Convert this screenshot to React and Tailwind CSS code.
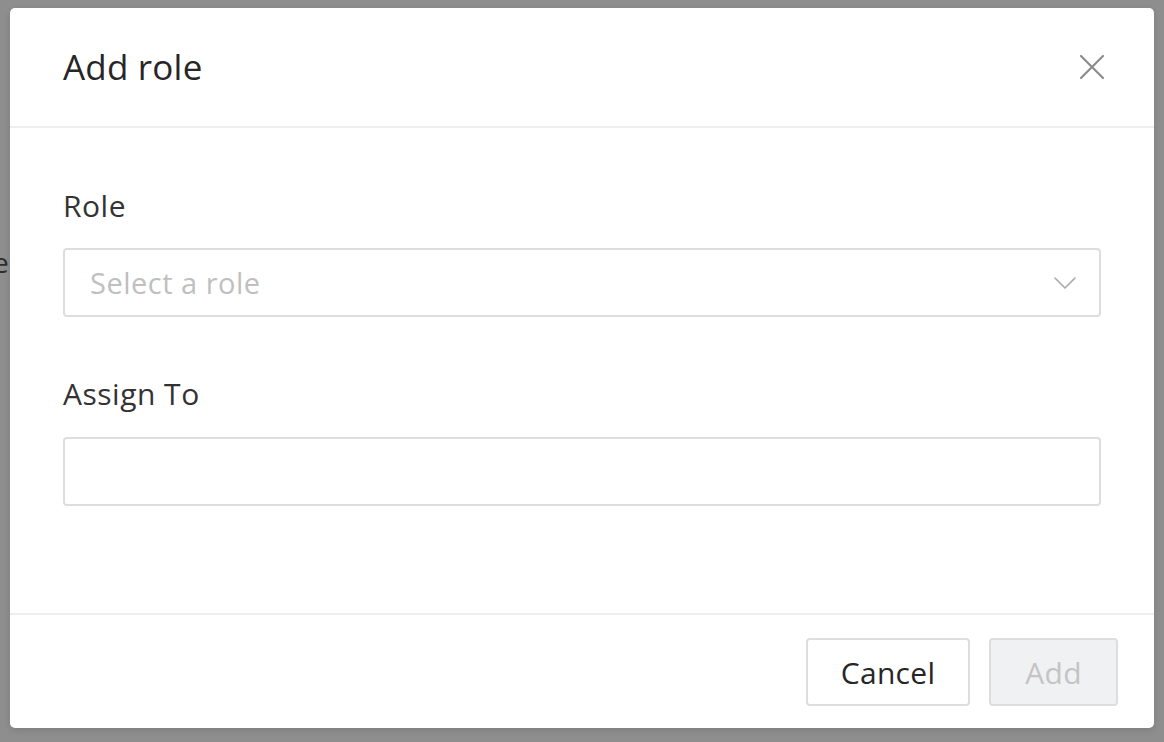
import React, { useState } from "react";

const font = { fontFamily: '"Open Sans", "Noto Sans", sans-serif' };

const ChevronDown = () => (
  <svg width="24" height="16" viewBox="0 0 24 16" fill="none" stroke="#a8a8a8" strokeWidth="1.6" strokeLinecap="round" strokeLinejoin="round">
    <path d="M2 3 L12 13 L22 3" />
  </svg>
);

const CloseIcon = () => (
  <svg width="26" height="26" viewBox="0 0 26 26" fill="none" stroke="#8c8c8c" strokeWidth="2.2" strokeLinecap="round">
    <path d="M2 2 L24 24 M24 2 L2 24" />
  </svg>
);

export default function App() {
  const [role, setRole] = useState("");
  const [assignee, setAssignee] = useState("");

  return (
    <div className="relative w-[1164px] h-[742px] overflow-hidden bg-[#8e8e8e]" style={font}>
      {/* page content peeking out under the overlay */}
      <span className="absolute left-[-7px] top-[242px] text-[28px] leading-[40px] text-[#2e2e2e]">e</span>

      <div className="relative ml-[10px] mt-[8px] w-[1144px] h-[720px] bg-white rounded-[5px] shadow-[0_2px_6px_rgba(0,0,0,0.12)] flex flex-col">
        {/* Header */}
        <div className="h-[120px] flex items-center justify-between pl-[53px] pr-[49px] border-b-2 border-[#eeeeee]">
          <h2 className="text-[35px] leading-[48px] font-medium tracking-[0.2px] text-[#262626]">Add role</h2>
          <button className="p-0 text-[#8c8c8c]" aria-label="Close">
            <CloseIcon />
          </button>
        </div>

        {/* Body */}
        <div className="flex-1 px-[53px] pt-[58px]">
          <label className="block text-[30px] leading-[40px] tracking-[0.5px] text-[#333333]">Role</label>
          <div className="relative mt-[22px]">
            <select
              value={role}
              onChange={(e) => setRole(e.target.value)}
              className="appearance-none w-full h-[69px] rounded-[4px] border-2 border-[#dddddd] bg-white pl-[25px] pr-[60px] text-[29px] tracking-[0.5px] text-[#bfbfbf] outline-none"
            >
              <option value="">Select a role</option>
              <option value="admin">Admin</option>
              <option value="editor">Editor</option>
              <option value="viewer">Viewer</option>
            </select>
            <div className="pointer-events-none absolute right-[24px] top-1/2 -translate-y-1/2">
              <ChevronDown />
            </div>
          </div>

          <label className="block mt-[57px] text-[30px] leading-[40px] tracking-[0.5px] text-[#333333]">Assign To</label>
          <input
            value={assignee}
            onChange={(e) => setAssignee(e.target.value)}
            className="block mt-[23px] w-full h-[69px] rounded-[4px] border-2 border-[#dddddd] bg-white px-[25px] text-[29px] text-[#333333] outline-none"
          />
        </div>

        {/* Footer */}
        <div className="border-t-2 border-[#eeeeee] flex justify-end gap-[19px] pr-[36px] pt-[23px] pb-[22px]">
          <button className="w-[164px] h-[68px] rounded-[4px] border-2 border-[#dddddd] bg-white text-[30px] tracking-[0.3px] text-[#262626]">
            Cancel
          </button>
          <button disabled className="w-[129px] h-[68px] rounded-[4px] border-2 border-[#dddddd] bg-[#f0f1f3] text-[30px] tracking-[0.3px] text-[#c4c4c4] cursor-not-allowed">
            Add
          </button>
        </div>
      </div>
    </div>
  );
}
